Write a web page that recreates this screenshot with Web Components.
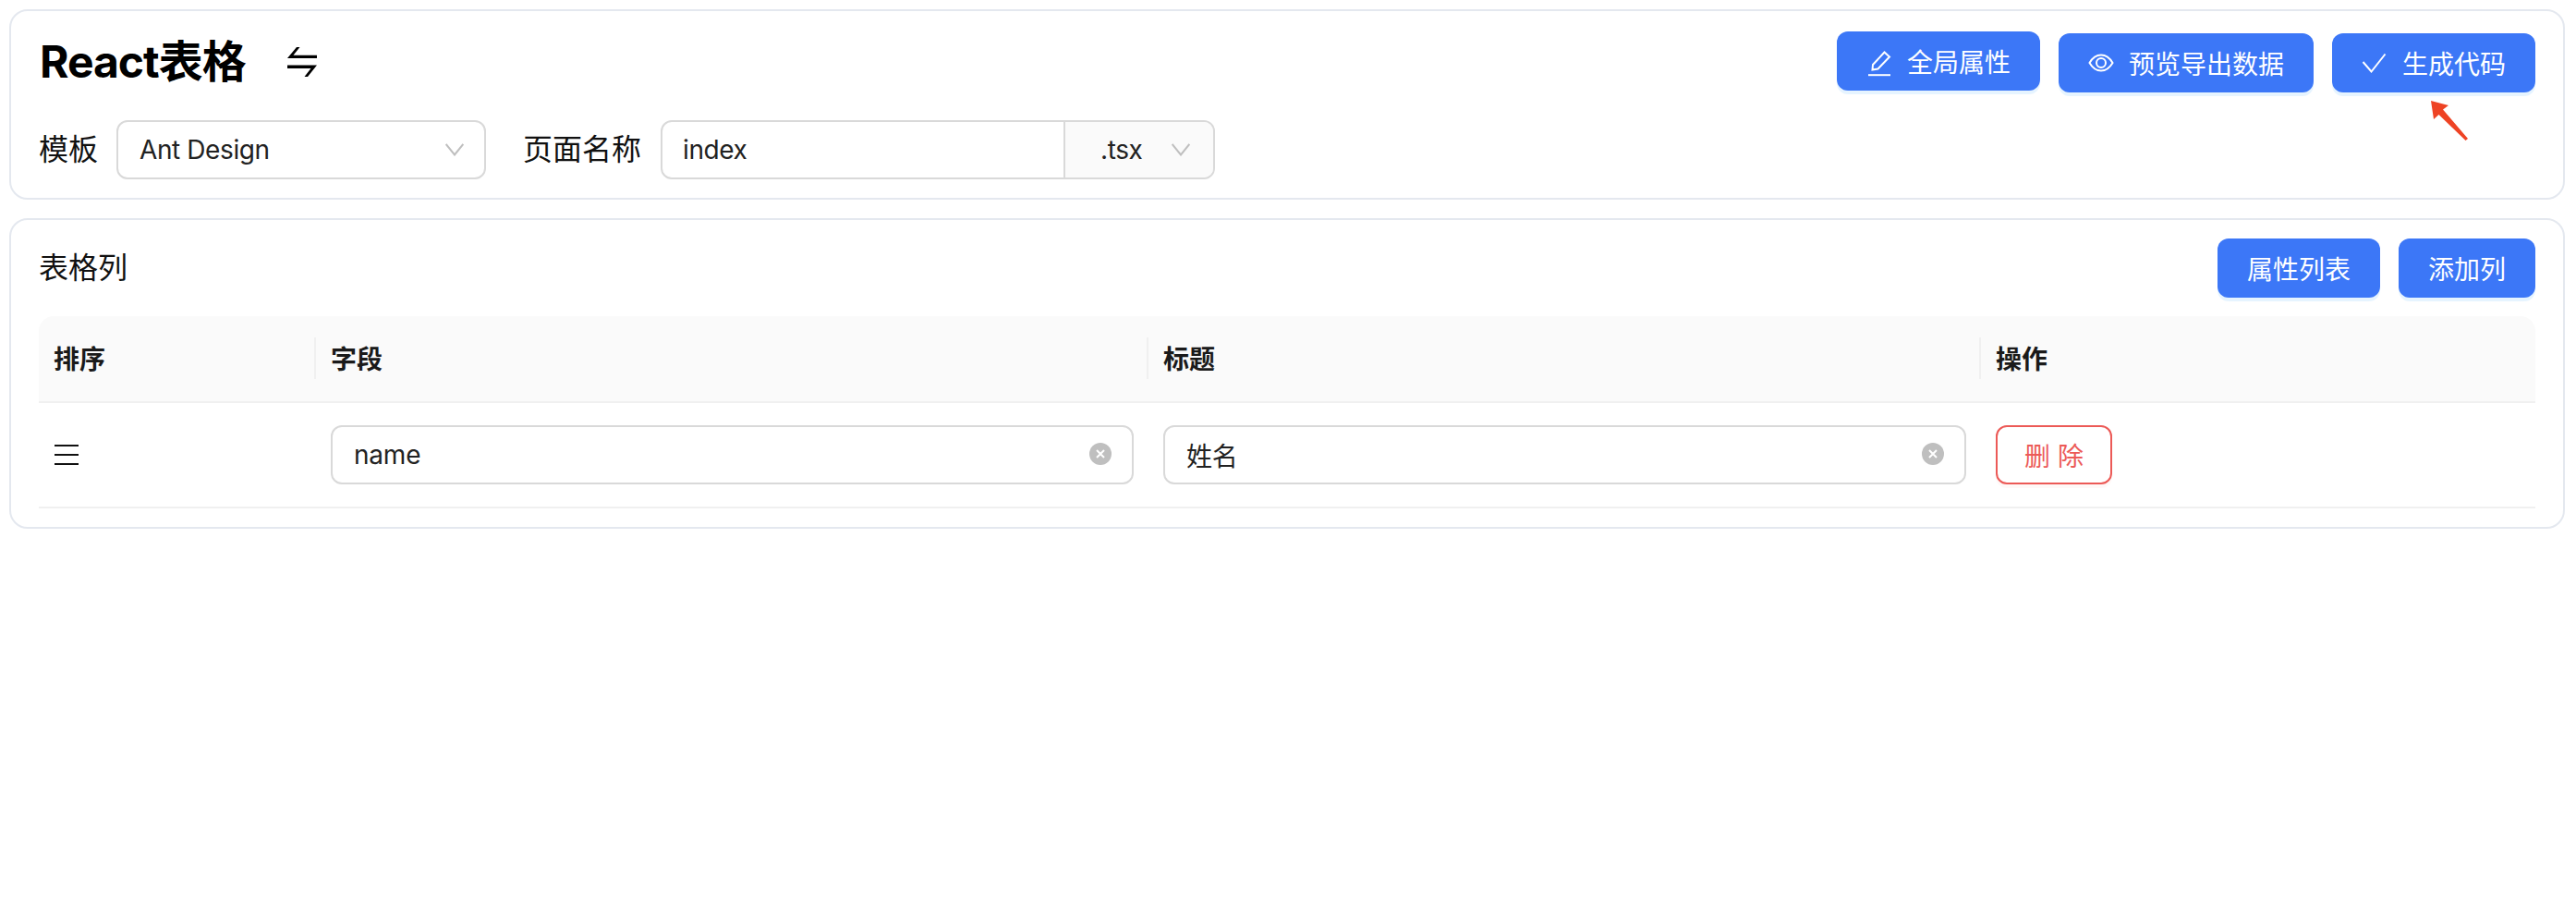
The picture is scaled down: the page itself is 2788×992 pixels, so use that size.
<!DOCTYPE html>
<html lang="zh">
<head>
<meta charset="utf-8">
<title>React表格</title>
<style>
    html, body { margin: 0; background: #fff; }
    body {
        font-family: Inter, "Noto Sans CJK SC", sans-serif;
        color: #111;
        padding: 10px 12px 0 10px;
    }
    .gap { height: 20px; }
</style>
</head>
<body>

<panel-card>
    <div slot="title" style="display:flex;align-items:center">
        <page-title>React表格</page-title>
        <swap-icon></swap-icon>
    </div>
    <div slot="actions" style="display:flex;gap:20px;align-items:flex-start">
        <app-button>
            <svg slot="icon" width="28" height="36" viewBox="0 0 28 36" fill="none" stroke="#fff" stroke-width="2">
                <path d="M6.5 27.5 L7 22 L19.5 8.5 L25 13.5 L12.5 26.5 Z"/>
                <path d="M2 33.2 H26"/>
            </svg>
            全局属性
        </app-button>
        <app-button nudge>
            <svg slot="icon" width="28" height="28" viewBox="0 0 28 28" fill="none" stroke="#fff" stroke-width="2">
                <path d="M1.5 14 C5 8 9 5.5 14 5.5 C19 5.5 23 8 26.5 14 C23 20 19 22.5 14 22.5 C9 22.5 5 20 1.5 14 Z"/>
                <circle cx="14" cy="14" r="5"/>
            </svg>
            预览导出数据
        </app-button>
        <app-button nudge>
            <svg slot="icon" width="28" height="28" viewBox="0 0 28 28" fill="none" stroke="#fff" stroke-width="2">
                <path d="M1.5 13 L10.5 23.5 L25.5 4.5"/>
            </svg>
            生成代码
        </app-button>
    </div>
    <div style="display:flex;align-items:center;margin-top:30px">
        <field-label>模板</field-label>
        <app-select style="margin-left:20px;width:400px">Ant Design</app-select>
        <field-label style="margin-left:40px">页面名称</field-label>
        <name-input style="margin-left:21px" value="index" suffix=".tsx"></name-input>
    </div>
    <hint-arrow></hint-arrow>
</panel-card>

<div class="gap"></div>

<panel-card tight>
    <field-label slot="title">表格列</field-label>
    <div slot="actions" style="display:flex;gap:20px">
        <app-button>属性列表</app-button>
        <app-button>添加列</app-button>
    </div>
    <div style="margin-top:20px">
        <table-row head>
            <head-cell sep>排序</head-cell>
            <head-cell sep>字段</head-cell>
            <head-cell sep>标题</head-cell>
            <head-cell>操作</head-cell>
        </table-row>
        <table-row>
            <body-cell><drag-handle></drag-handle></body-cell>
            <body-cell><clear-input>name</clear-input></body-cell>
            <body-cell><clear-input>姓名</clear-input></body-cell>
            <body-cell><app-button danger>删 除</app-button></body-cell>
        </table-row>
    </div>
</panel-card>

<script>
// card with an optional header line (title on the left, actions on the right)
class PanelCard extends HTMLElement {
    constructor() {
        super()
        this.attachShadow({mode: "open"}).innerHTML = `
            <style>
                :host {
                    display: block;
                    position: relative;
                    box-sizing: border-box;
                    border: 2px solid #e4e8ef;
                    border-radius: 20px;
                    padding: 22px 30px 20px 30px;
                    background: #fff;
                }
                :host([tight]) { padding-top: 20px; }
                .top {
                    display: flex;
                    justify-content: space-between;
                    align-items: center;
                }
            </style>
            <div class="top"><slot name="title"></slot><slot name="actions"></slot></div>
            <slot></slot>
        `
    }
}
customElements.define("panel-card", PanelCard)

class PageTitle extends HTMLElement {
    constructor() {
        super()
        this.attachShadow({mode: "open"}).innerHTML = `
            <style>
                :host {
                    display: block;
                    font-size: 48px;
                    line-height: 66px;
                    font-weight: 700;
                    letter-spacing: -1px;
                    color: #000;
                    margin-left: 1px;
                }
            </style>
            <slot></slot>
        `
    }
}
customElements.define("page-title", PageTitle)

class SwapIcon extends HTMLElement {
    constructor() {
        super()
        this.attachShadow({mode: "open"}).innerHTML = `
            <style>
                :host { display: block; width: 34px; height: 34px; margin-left: 44px; }
                svg { display: block; }
            </style>
            <svg width="34" height="34" viewBox="0 0 34 34" fill="#000">
                <path d="M1 13 L11 1 H14.5 L7.5 9.7 H33 V13 Z"/>
                <path d="M33 20.5 L23 33 H19.5 L26.5 24 H1 V20.5 Z"/>
            </svg>
        `
    }
}
customElements.define("swap-icon", SwapIcon)

class AppButton extends HTMLElement {
    constructor() {
        super()
        this.attachShadow({mode: "open"}).innerHTML = `
            <style>
                :host {
                    display: inline-flex;
                    align-items: center;
                    box-sizing: border-box;
                    height: 64px;
                    padding: 0 32px;
                    border-radius: 12px;
                    background: #3c77f7;
                    color: #fff;
                    font-size: 28px;
                    white-space: nowrap;
                    box-shadow: 0 4px 0 rgba(5, 145, 255, .1);
                }
                :host([nudge]) { margin-top: 2px; }
                :host([danger]) {
                    justify-content: center;
                    width: 126px;
                    background: #fff;
                    color: #ec5a57;
                    border: 2px solid #ec5a57;
                    padding: 0;
                    box-shadow: 0 4px 0 rgba(255, 38, 5, .03);
                }
                ::slotted([slot=icon]) { margin-right: 16px; flex: none; }
            </style>
            <slot name="icon"></slot><slot></slot>
        `
    }
}
customElements.define("app-button", AppButton)

class FieldLabel extends HTMLElement {
    constructor() {
        super()
        this.attachShadow({mode: "open"}).innerHTML = `
            <style>
                :host { display: block; font-size: 32px; line-height: 44px; color: #111; white-space: nowrap; }
            </style>
            <slot></slot>
        `
    }
}
customElements.define("field-label", FieldLabel)

const chevron = `<svg width="20" height="14" viewBox="0 0 20 14" fill="none" stroke="#bfbfbf" stroke-width="2"><path d="M.7 1 L10 12.5 L19.3 1"/></svg>`

class AppSelect extends HTMLElement {
    constructor() {
        super()
        this.attachShadow({mode: "open"}).innerHTML = `
            <style>
                :host {
                    display: flex;
                    align-items: center;
                    justify-content: space-between;
                    box-sizing: border-box;
                    height: 64px;
                    padding: 0 22px 0 23px;
                    border: 2px solid #d9d9d9;
                    border-radius: 12px;
                    font-size: 28px;
                    letter-spacing: -.4px;
                    color: #222;
                }
                svg { display: block; }
            </style>
            <slot></slot>${chevron}
        `
    }
}
customElements.define("app-select", AppSelect)

// text box with a select glued on its right side
class NameInput extends HTMLElement {
    connectedCallback() {
        if (this.shadowRoot) return
        this.attachShadow({mode: "open"}).innerHTML = `
            <style>
                :host {
                    display: flex;
                    box-sizing: border-box;
                    width: 600px;
                    height: 64px;
                    border: 2px solid #d9d9d9;
                    border-radius: 12px;
                    font-size: 28px;
                    letter-spacing: -.4px;
                    color: #222;
                    overflow: hidden;
                }
                .value {
                    flex: 1;
                    display: flex;
                    align-items: center;
                    padding-left: 22px;
                }
                .addon {
                    display: flex;
                    align-items: center;
                    box-sizing: border-box;
                    width: 162px;
                    padding-left: 38px;
                    gap: 32px;
                    background: #fafafa;
                    border-left: 2px solid #d9d9d9;
                }
                svg { display: block; }
            </style>
            <div class="value">${this.getAttribute("value")}</div>
            <div class="addon">${this.getAttribute("suffix")}${chevron}</div>
        `
    }
}
customElements.define("name-input", NameInput)

class ClearInput extends HTMLElement {
    constructor() {
        super()
        this.attachShadow({mode: "open"}).innerHTML = `
            <style>
                :host {
                    display: flex;
                    align-items: center;
                    justify-content: space-between;
                    box-sizing: border-box;
                    height: 64px;
                    padding: 0 22px 0 23px;
                    border: 2px solid #d9d9d9;
                    border-radius: 12px;
                    font-size: 28px;
                    letter-spacing: -.2px;
                    color: #222;
                }
                svg { display: block; margin-top: -2px; }
            </style>
            <slot></slot>
            <svg width="24" height="24" viewBox="0 0 24 24">
                <circle cx="12" cy="12" r="12" fill="#bfbfbf"/>
                <path d="M8 8 L16 16 M16 8 L8 16" stroke="#fff" stroke-width="2" fill="none"/>
            </svg>
        `
    }
}
customElements.define("clear-input", ClearInput)

class TableRow extends HTMLElement {
    constructor() {
        super()
        this.attachShadow({mode: "open"}).innerHTML = `
            <style>
                :host {
                    display: grid;
                    grid-template-columns: 300px 901px 901px 1fr;
                    border-bottom: 2px solid #f0f0f0;
                    box-sizing: border-box;
                }
                :host([head]) {
                    background: #fafafa;
                    border-radius: 16px 16px 0 0;
                    height: 94px;
                }
            </style>
            <slot></slot>
        `
    }
}
customElements.define("table-row", TableRow)

class HeadCell extends HTMLElement {
    constructor() {
        super()
        this.attachShadow({mode: "open"}).innerHTML = `
            <style>
                :host {
                    display: flex;
                    align-items: center;
                    position: relative;
                    padding: 0 0 3px 16px;
                    font-size: 28px;
                    font-weight: 600;
                    color: #1a1a1a;
                }
                :host([sep])::after {
                    content: "";
                    position: absolute;
                    right: 0;
                    top: 23px;
                    width: 2px;
                    height: 45px;
                    background: #f0f0f0;
                }
            </style>
            <slot></slot>
        `
    }
}
customElements.define("head-cell", HeadCell)

class BodyCell extends HTMLElement {
    constructor() {
        super()
        this.attachShadow({mode: "open"}).innerHTML = `
            <style>
                :host { display: block; padding: 24px 16px; }
            </style>
            <slot></slot>
        `
    }
}
customElements.define("body-cell", BodyCell)

class DragHandle extends HTMLElement {
    constructor() {
        super()
        this.attachShadow({mode: "open"}).innerHTML = `
            <style>
                :host { display: flex; align-items: center; height: 64px; }
                svg { display: block; }
            </style>
            <svg width="28" height="24" viewBox="0 0 28 24" stroke="#111" stroke-width="2" fill="none">
                <path d="M1 2 H27 M1 12 H27 M1 22 H27"/>
            </svg>
        `
    }
}
customElements.define("drag-handle", DragHandle)

// red annotation arrow that sits over the card, below the last button
class HintArrow extends HTMLElement {
    constructor() {
        super()
        this.attachShadow({mode: "open"}).innerHTML = `
            <style>
                :host { position: absolute; left: 2617px; top: 95px; width: 44px; height: 46px; }
                svg { display: block; }
            </style>
            <svg width="44" height="46" viewBox="0 0 44 46" fill="#ee4324">
                <path d="M2 2 L21 7 L15 11.5 L42 43 L39.5 45 L10.5 17 L5 22 Z"/>
            </svg>
        `
    }
}
customElements.define("hint-arrow", HintArrow)
</script>
</body>
</html>
